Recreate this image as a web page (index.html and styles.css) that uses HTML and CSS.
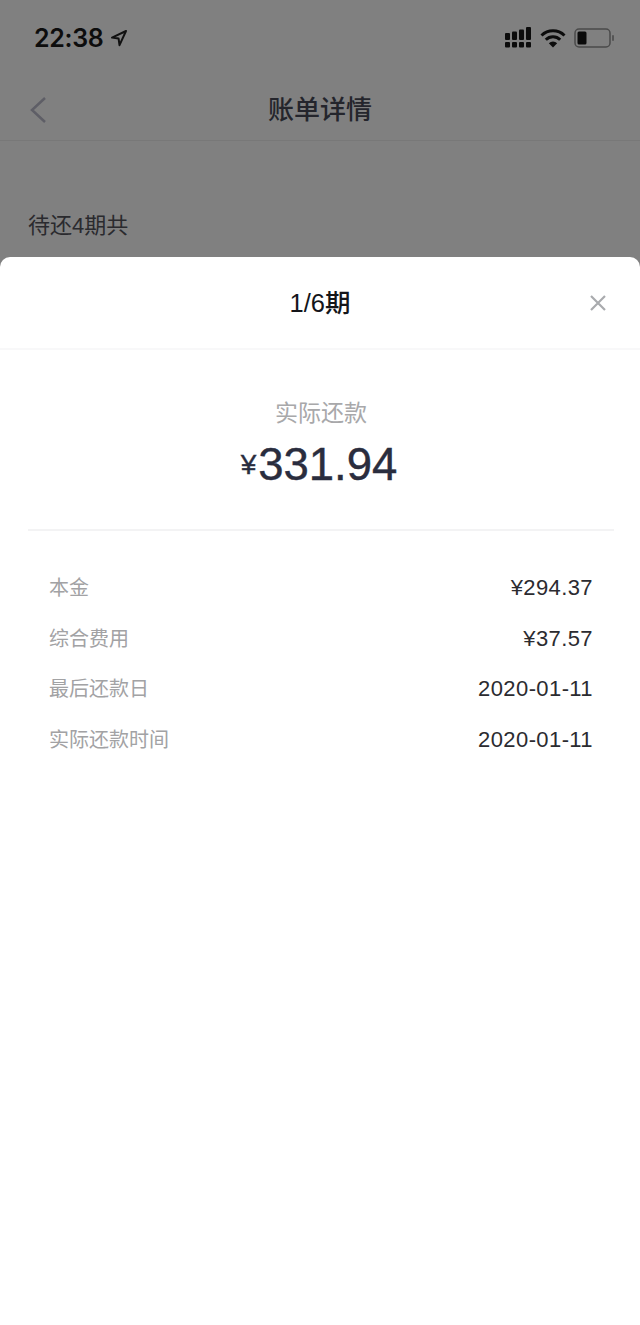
FILE: index.html
```html
<!DOCTYPE html>
<html lang="zh-CN">
<head>
<meta charset="utf-8">
<title>账单详情</title>
<link rel="stylesheet" href="styles.css">
</head>
<body>
<div class="page">
  <div class="backdrop">
    <div class="status">
      <div class="status-left">
        <span class="clock">22:38</span>
        <svg class="loc" viewBox="0 0 18 18"><path d="M16 2 2 8.600l6.600 1 .9 6.600z" fill="none" stroke="#111" stroke-width="2" stroke-linejoin="round"/></svg>
      </div>
      <div class="status-right">
        <svg class="signal" viewBox="0 0 30 22"><g fill="#0c0c0c"><rect x="0" y="6" width="5" height="7" rx="1"/><rect x="7" y="4.500" width="5" height="8.500" rx="1"/><rect x="14" y="2.500" width="5" height="10.500" rx="1"/><rect x="21" y="0" width="5" height="13" rx="1"/><rect x="0" y="15" width="5" height="5.500" rx="1"/><rect x="7" y="15" width="5" height="5.500" rx="1"/><rect x="14" y="15" width="5" height="5.500" rx="1"/><rect x="21" y="15" width="5" height="5.500" rx="1"/></g></svg>
        <svg class="wifi" viewBox="0 0 26 20"><g fill="none" stroke="#0c0c0c" stroke-width="3"><path d="M1.500 7.500a16.500 16.500 0 0 1 23 0"/><path d="M5.800 11.800a10.300 10.300 0 0 1 14.400 0"/></g><path d="M13 19.500 8.800 15.200a6 6 0 0 1 8.400 0z" fill="#0c0c0c"/></svg>
        <svg class="battery" viewBox="0 0 42 20"><rect x="1" y="1" width="35" height="18" rx="4" fill="none" stroke="#4a4a4a" stroke-width="1.500"/><rect x="3.500" y="3.500" width="9" height="13" rx="1.500" fill="#0a0a0a"/><rect x="38" y="7" width="2" height="6" rx="1" fill="#555"/></svg>
      </div>
    </div>
    <div class="nav">
      <svg class="back" viewBox="0 0 18 28"><path d="M16 2 3 14l13 12" fill="none" stroke="#5e5e66" stroke-width="2.500"/></svg>
      <h1 class="nav-title">账单详情</h1>
    </div>
    <div class="summary">待还4期共</div>
  </div>
  <section class="sheet">
    <header class="sheet-head">
      <h2 class="sheet-title">1/6期</h2>
      <svg class="close" viewBox="0 0 16 16"><path d="M1 1l14 14M15 1 1 15" stroke="#a9abae" stroke-width="2.200" fill="none"/></svg>
    </header>
    <div class="amount-block">
      <div class="amount-label">实际还款</div>
      <div class="amount"><span class="yen">¥</span>331.94</div>
    </div>
    <dl class="rows">
      <div class="row"><dt>本金</dt><dd>¥294.37</dd></div>
      <div class="row"><dt>综合费用</dt><dd>¥37.57</dd></div>
      <div class="row"><dt>最后还款日</dt><dd>2020-01-11</dd></div>
      <div class="row"><dt>实际还款时间</dt><dd>2020-01-11</dd></div>
    </dl>
  </section>
</div>
</body>
</html>
```
FILE: styles.css
```css
* { box-sizing: border-box; margin: 0; padding: 0; }
html, body { height: 100%; }
body { background: #fff; font-family: "Liberation Sans", "Noto Sans CJK SC", sans-serif; overflow: hidden; }
.page { height: 1325px; display: flex; flex-direction: column; background: #808080; }
.backdrop { height: 257px; flex: none; }
.status { height: 76px; display: flex; justify-content: space-between; align-items: center; padding: 0 24px 0 34px; }
.status-left { display: flex; align-items: center; gap: 6px; }
.clock { font-size: 25px; line-height: 30px; color: #0d0d0d; font-family: Inter, "Liberation Sans", sans-serif; font-weight: 600; letter-spacing: -0.3px; }
.loc { width: 18px; height: 18px; }
.status-right { display: flex; align-items: center; gap: 8px; }
.signal { width: 30px; height: 22px; margin-right: -3px; }
.wifi { width: 26px; height: 20px; }
.battery { width: 42px; height: 20px; }
.nav { height: 65px; display: flex; align-items: center; justify-content: center; position: relative; border-bottom: 1px solid #787878; }
.back { position: absolute; left: 29px; top: 20px; width: 18px; height: 28px; }
.nav-title { font-size: 26px; font-weight: 500; color: #24252c; line-height: 36px; margin-top: 4px; }
.summary { margin-top: 70px; padding-left: 28px; font-size: 22px; line-height: 30px; color: #2a2a2e; }
.sheet { flex: 1; background: #fff; border-radius: 10px 10px 0 0; }
.sheet-head { height: 93px; display: flex; align-items: center; justify-content: center; position: relative; border-bottom: 2px solid #f8f8f9; }
.sheet-title { font-size: 25.500px; font-weight: 500; color: #14151a; line-height: 32px; }
.close { position: absolute; right: 34px; top: 38px; width: 16px; height: 16px; }
.amount-block { margin: 0 26px 0 28px; padding-top: 47px; height: 181px; border-bottom: 2px solid #f3f3f4; text-align: center; }
.amount-label { font-size: 23px; line-height: 32px; color: #a8a8aa; }
.amount { font-size: 45.500px; line-height: 56px; color: #2a2d3e; margin-top: 8px; padding-right: 4px; font-family: "Liberation Sans", sans-serif; -webkit-text-stroke: 0.4px #2a2d3e; }
.yen { font-size: 28px; vertical-align: 6px; margin-right: 2px; }
.rows { padding: 32px 47px 0 49px; }
.row { height: 50.500px; display: flex; justify-content: space-between; align-items: center; }
.row dt { font-size: 20px; line-height: 24px; color: #a2a2a4; }
.row dd { font-size: 22px; line-height: 24px; color: #2b2b30; letter-spacing: 0.4px; }
```
